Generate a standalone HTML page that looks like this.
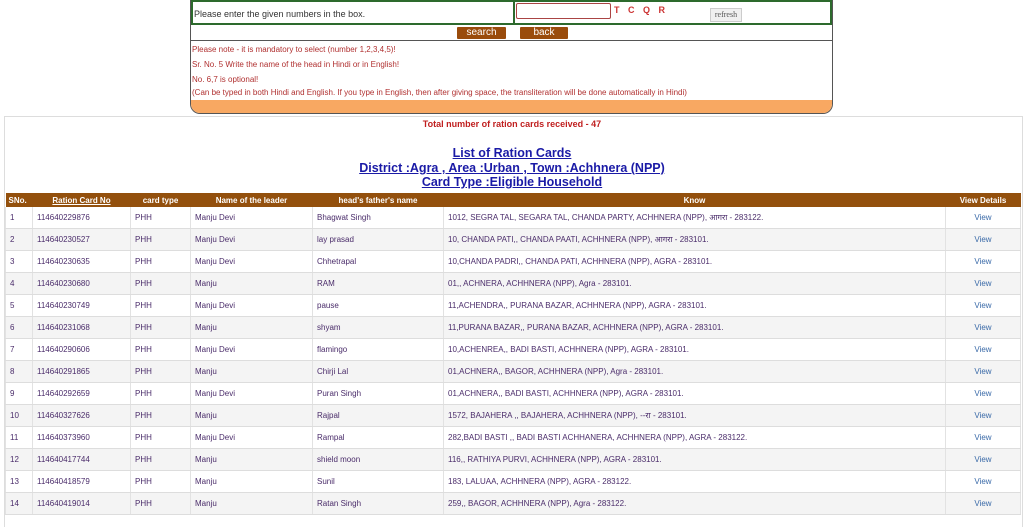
<!DOCTYPE html>
<html><head><meta charset="utf-8"><style>
body{margin:0;background:#fff;font-family:"Liberation Sans","Noto Sans CJK SC",sans-serif;width:1024px;height:517px;overflow:hidden;position:relative}
.abs{position:absolute}
#form{left:190px;top:0;width:643px;height:114px;border:1px solid #555;border-top:none;border-radius:0 0 10px 10px;overflow:hidden;box-sizing:border-box}
#r1{left:0;top:0;width:641px;height:25px;border:2px solid #2d6a2d;box-sizing:border-box}
.note{color:#b03030;font-size:8px;left:1px}
.btn{background:#9a4c0c;color:#fff;font-size:10px;text-align:center;height:12px;line-height:12px;top:27px;border-radius:1px}
#outer{left:4px;top:116px;width:1017px;height:410px;border:1px solid #ddd;border-bottom:none}
.h{color:#1a1aa6;font-weight:bold;text-decoration:underline;font-size:12.5px;text-align:center;width:1024px;left:0}
table{position:absolute;left:5px;top:193px;width:1016px;border-collapse:collapse;font-size:8px;color:#4a2c6a}
th{background:#93500d;color:#fff;height:14px;font-weight:bold;padding:0;text-align:center;font-size:8px}
td{height:21px;border:1px solid #e2e2e2;padding:0 0 0 4px;border-top:none;border-bottom:1px solid #ddd}
tr:nth-child(odd) td{background:#f4f4f4}
td.v{text-align:center;color:#3a6aa8;padding:0}
</style></head><body>
<div id="form" class="abs">
 <div id="r1" class="abs">
  <div class="abs" style="left:1px;top:7px;font-size:9px;color:#333">Please enter the given numbers in the box.</div>
  <div class="abs" style="left:320px;top:0;width:2px;height:21px;background:#2d6a2d"></div>
  <div class="abs" style="left:323px;top:1px;width:93px;height:14px;border:1px solid #a44;border-radius:2px"></div>
  <div class="abs" style="left:421px;top:3px;font-size:9px;color:#c33;font-weight:bold;letter-spacing:3px">T C Q R</div>
  <div class="abs" style="left:517px;top:6px;width:30px;height:12px;border:1px solid #ccc;background:#f0f0f0;font-family:'Liberation Serif',serif;font-size:8px;color:#555;text-align:center;line-height:12px">refresh</div>
 </div>
 <div class="abs btn" style="left:266px;width:49px">search</div>
 <div class="abs btn" style="left:329px;width:48px">back</div>
 <div class="abs" style="left:0;top:40px;width:643px;height:1px;background:#555"></div>
 <div class="abs note" style="top:45px">Please note - it is mandatory to select (number 1,2,3,4,5)!</div>
 <div class="abs note" style="top:60px">Sr. No. 5 Write the name of the head in Hindi or in English!</div>
 <div class="abs note" style="top:75px">No. 6,7 is optional!</div>
 <div class="abs note" style="top:88px">(Can be typed in both Hindi and English. If you type in English, then after giving space, the transliteration will be done automatically in Hindi)</div>
 <div class="abs" style="left:0;top:100px;width:643px;height:14px;background:#f8a862"></div>
</div>
<div id="outer" class="abs"></div>
<div class="abs" style="left:0;top:119px;width:1024px;text-align:center;color:#c02020;font-weight:bold;font-size:9px">Total number of ration cards received - 47</div>
<div class="abs h" style="top:146px">List of Ration Cards</div>
<div class="abs h" style="top:161px">District :Agra , Area :Urban , Town :Achhnera (NPP)</div>
<div class="abs h" style="top:175px">Card Type :Eligible Household</div>
<table>
<colgroup><col style="width:27px"><col style="width:98px"><col style="width:60px"><col style="width:122px"><col style="width:131px"><col style="width:502px"><col></colgroup>
<tr><th style="text-align:left;padding-left:3px">SNo.</th><th style="text-decoration:underline">Ration Card No</th><th>card type</th><th>Name of the leader</th><th>head's father's name</th><th>Know</th><th>View Details</th></tr>
<tr><td>1</td><td>114640229876</td><td>PHH</td><td>Manju Devi</td><td>Bhagwat Singh</td><td>1012, SEGRA TAL, SEGARA TAL, CHANDA PARTY, ACHHNERA (NPP), आगरा - 283122.</td><td class="v">View</td></tr>
<tr><td>2</td><td>114640230527</td><td>PHH</td><td>Manju Devi</td><td>lay prasad</td><td>10, CHANDA PATI,, CHANDA PAATI, ACHHNERA (NPP), आगरा - 283101.</td><td class="v">View</td></tr>
<tr><td>3</td><td>114640230635</td><td>PHH</td><td>Manju Devi</td><td>Chhetrapal</td><td>10,CHANDA PADRI,, CHANDA PATI, ACHHNERA (NPP), AGRA - 283101.</td><td class="v">View</td></tr>
<tr><td>4</td><td>114640230680</td><td>PHH</td><td>Manju</td><td>RAM</td><td>01,, ACHNERA, ACHHNERA (NPP), Agra - 283101.</td><td class="v">View</td></tr>
<tr><td>5</td><td>114640230749</td><td>PHH</td><td>Manju Devi</td><td>pause</td><td>11,ACHENDRA,, PURANA BAZAR, ACHHNERA (NPP), AGRA - 283101.</td><td class="v">View</td></tr>
<tr><td>6</td><td>114640231068</td><td>PHH</td><td>Manju</td><td>shyam</td><td>11,PURANA BAZAR,, PURANA BAZAR, ACHHNERA (NPP), AGRA - 283101.</td><td class="v">View</td></tr>
<tr><td>7</td><td>114640290606</td><td>PHH</td><td>Manju Devi</td><td>flamingo</td><td>10,ACHENREA,, BADI BASTI, ACHHNERA (NPP), AGRA - 283101.</td><td class="v">View</td></tr>
<tr><td>8</td><td>114640291865</td><td>PHH</td><td>Manju</td><td>Chirji Lal</td><td>01,ACHNERA,, BAGOR, ACHHNERA (NPP), Agra - 283101.</td><td class="v">View</td></tr>
<tr><td>9</td><td>114640292659</td><td>PHH</td><td>Manju Devi</td><td>Puran Singh</td><td>01,ACHNERA,, BADI BASTI, ACHHNERA (NPP), AGRA - 283101.</td><td class="v">View</td></tr>
<tr><td>10</td><td>114640327626</td><td>PHH</td><td>Manju</td><td>Rajpal</td><td>1572, BAJAHERA ,, BAJAHERA, ACHHNERA (NPP), --रा - 283101.</td><td class="v">View</td></tr>
<tr><td>11</td><td>114640373960</td><td>PHH</td><td>Manju Devi</td><td>Rampal</td><td>282,BADI BASTI ,, BADI BASTI ACHHANERA, ACHHNERA (NPP), AGRA - 283122.</td><td class="v">View</td></tr>
<tr><td>12</td><td>114640417744</td><td>PHH</td><td>Manju</td><td>shield moon</td><td>116,, RATHIYA PURVI, ACHHNERA (NPP), AGRA - 283101.</td><td class="v">View</td></tr>
<tr><td>13</td><td>114640418579</td><td>PHH</td><td>Manju</td><td>Sunil</td><td>183, LALUAA, ACHHNERA (NPP), AGRA - 283122.</td><td class="v">View</td></tr>
<tr><td>14</td><td>114640419014</td><td>PHH</td><td>Manju</td><td>Ratan Singh</td><td>259,, BAGOR, ACHHNERA (NPP), Agra - 283122.</td><td class="v">View</td></tr>
</table>
</body></html>
